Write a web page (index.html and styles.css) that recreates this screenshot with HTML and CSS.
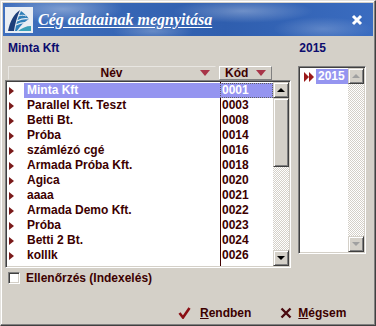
FILE: index.html
```html
<!DOCTYPE html>
<html lang="hu">
<head>
    <meta charset="UTF-8">
    <title>Cég adatainak megnyitása</title>
    <link rel="stylesheet" href="styles.css">
</head>
<body>
    <div class="window">
        <div class="titlebar">
            <svg class="logo" width="28" height="26" viewBox="0 0 28 26">
                <rect x="0" y="0" width="28" height="26" fill="#e9eef4"/>
                <path d="M3 24 C5 14 9 7 15 3 C12 10 10 17 9 24 Z" fill="#1d3f7a"/>
                <path d="M10 24 C11 17 13 10 16 4 C19 6 22 9 24 12 C19 15 15 19 12 24 Z" fill="#2f7fb8"/>
                <path d="M12 14 C16 12 20 11 24 12" stroke="#e9eef4" stroke-width="1.2" fill="none"/>
                <path d="M11 18 C15 16 19 15 24 16" stroke="#e9eef4" stroke-width="1.2" fill="none"/>
                <path d="M13 9 C16 8 19 8 21 9" stroke="#e9eef4" stroke-width="1" fill="none"/>
                <path d="M13 24 C17 21 21 19 26 19 L26 24 Z" fill="#3aa0b8"/>
            </svg>
            <span class="title">Cég adatainak megnyitása</span>
            <svg class="close" width="12" height="12" viewBox="0 0 12 12">
                <path d="M2 2 L10 10 M10 2 L2 10" stroke="#fff" stroke-width="3"/>
            </svg>
        </div>

        <div class="content">
            <div class="labels">
                <span class="company">Minta Kft</span>
                <span class="year-label">2015</span>
            </div>

            <div class="lists">
                <div class="grid-wrap">
                    <div class="grid-head">
                        <div class="head-name"><span class="head-text">Név</span><i class="sort"></i></div>
                        <div class="head-code"><span>Kód</span><i class="sort"></i></div>
                    </div>
                    <div class="grid sunken">
                        <div class="rows">
                            <div class="row selected"><span class="mark"></span><span class="name">Minta Kft</span><span class="code">0001</span></div>
                            <div class="row"><span class="mark"></span><span class="name">Parallel Kft. Teszt</span><span class="code">0003</span></div>
                            <div class="row"><span class="mark"></span><span class="name">Betti Bt.</span><span class="code">0008</span></div>
                            <div class="row"><span class="mark"></span><span class="name">Próba</span><span class="code">0014</span></div>
                            <div class="row"><span class="mark"></span><span class="name">számlézó cgé</span><span class="code">0016</span></div>
                            <div class="row"><span class="mark"></span><span class="name">Armada Próba Kft.</span><span class="code">0018</span></div>
                            <div class="row"><span class="mark"></span><span class="name">Agica</span><span class="code">0020</span></div>
                            <div class="row"><span class="mark"></span><span class="name">aaaa</span><span class="code">0021</span></div>
                            <div class="row"><span class="mark"></span><span class="name">Armada Demo Kft.</span><span class="code">0022</span></div>
                            <div class="row"><span class="mark"></span><span class="name">Próba</span><span class="code">0023</span></div>
                            <div class="row"><span class="mark"></span><span class="name">Betti 2 Bt.</span><span class="code">0024</span></div>
                            <div class="row"><span class="mark"></span><span class="name">kolllk</span><span class="code">0026</span></div>
                        </div>
                        <div class="vscroll">
                            <div class="sbtn"><i class="arrow-up"></i></div>
                            <div class="thumb"></div>
                            <div class="track"></div>
                            <div class="sbtn"><i class="arrow-down"></i></div>
                        </div>
                    </div>
                </div>

                <div class="years sunken">
                    <div class="year-rows">
                        <div class="year-row"><span class="mark2"><i></i><i></i></span><span class="year selected-year">2015</span></div>
                    </div>
                    <div class="vscroll disabled">
                        <div class="sbtn"><i class="arrow-up"></i></div>
                        <div class="track"></div>
                        <div class="sbtn"><i class="arrow-down"></i></div>
                    </div>
                </div>
            </div>

            <label class="check">
                <span class="box"></span>
                <span>Ellenőrzés (Indexelés)</span>
            </label>

            <div class="buttons">
                <div class="btn ok">
                    <svg width="13" height="12" viewBox="0 0 13 12">
                        <path d="M1.5 6 L5 10.5 L11.5 1" stroke="#8b0f14" stroke-width="2.6" fill="none"/>
                    </svg>
                    <span><u>R</u>endben</span>
                </div>
                <div class="btn cancel">
                    <svg width="12" height="12" viewBox="0 0 12 12">
                        <path d="M1.5 1.5 L10.5 10.5 M10.5 1.5 L1.5 10.5" stroke="#4a0a10" stroke-width="2.4"/>
                    </svg>
                    <span><u>M</u>égsem</span>
                </div>
            </div>
        </div>
    </div>
</body>
</html>
```

FILE: styles.css
```css
body {
    margin: 0;
    font-family: "Liberation Sans", Arial, sans-serif;
    font-size: 12px;
    font-weight: bold;
}
.window {
    width: 376px;
    height: 326px;
    box-sizing: border-box;
    background-color: #d4d0c8;
    border: 1px solid;
    border-color: #e4e2de #404040 #404040 #e4e2de;
    box-shadow: inset -1px -1px #808080, inset 1px 1px #fff;
    padding: 2px;
}
.titlebar {
    height: 33px;
    display: flex;
    align-items: center;
    padding-left: 2px;
    background-color: #3463b3;
    background-image:
        radial-gradient(ellipse 60px 14px at 60px 6px, rgba(255,255,255,0.35), transparent),
        radial-gradient(ellipse 40px 10px at 150px 28px, rgba(255,255,255,0.25), transparent),
        radial-gradient(ellipse 70px 12px at 240px 8px, rgba(255,255,255,0.3), transparent),
        radial-gradient(ellipse 50px 12px at 320px 26px, rgba(255,255,255,0.2), transparent),
        linear-gradient(to right, #3f6fbd, #2f5eae 60%, #3a6cc0);
}
.logo {
    display: block;
}
.title {
    margin-left: 5px;
    font-family: "Liberation Serif", "Times New Roman", serif;
    font-style: italic;
    font-size: 16px;
    color: #fff;
    text-decoration: underline;
    text-underline-offset: 2px;
}
.close {
    margin-left: auto;
    margin-right: 10px;
}
.content {
    padding: 0 2px;
}
.labels {
    display: flex;
    height: 14px;
    line-height: 14px;
    margin-top: 5px;
    color: #0c0c6e;
}
.company {
    margin-left: 3px;
}
.year-label {
    margin-left: auto;
    margin-right: 45px;
}
.lists {
    display: flex;
    gap: 7px;
    margin-top: 11px;
}
.grid-wrap {
    width: 286px;
}
.grid-head {
    display: flex;
    height: 14px;
    color: #400000;
}
.head-name,
.head-code {
    display: flex;
    align-items: center;
    box-sizing: border-box;
    border: 1px solid;
    border-color: #fff #808080 #808080 #fff;
}
.head-name {
    width: 208px;
    margin-left: 3px;
    border-color: #e8e6e2 #d4d0c8 #d4d0c8 #e8e6e2;
}
.head-text {
    flex: 1;
    text-align: center;
    padding-left: 14px;
}
.head-code {
    width: 53px;
    margin-left: 3px;
    padding-left: 5px;
}
.head-code span {
    flex: 1;
}
.sort {
    width: 0;
    height: 0;
    border-left: 5px solid transparent;
    border-right: 5px solid transparent;
    border-top: 6px solid #a83448;
    margin-right: 5px;
}
.sunken {
    box-sizing: border-box;
    border: 1px solid;
    border-color: #808080 #fff #fff #808080;
    box-shadow: inset 1px 1px #404040, inset -1px -1px #d4d0c8;
    background-color: #fff;
    padding: 1px;
}
.grid {
    display: flex;
    height: 188px;
}
.rows {
    flex: 1;
    padding-top: 1px;
    background-image: linear-gradient(#400000, #400000);
    background-repeat: no-repeat;
    background-position: 213px 0;
    background-size: 1px 100%;
    color: #3c0000;
}
.row {
    display: flex;
    height: 15px;
    line-height: 15px;
}
.mark {
    width: 17px;
    display: flex;
    align-items: center;
}
.mark::before {
    content: "";
    margin-left: 2px;
    width: 0;
    height: 0;
    border-top: 4px solid transparent;
    border-bottom: 4px solid transparent;
    border-left: 5px solid #7a1a1a;
}
.name {
    width: 193px;
    padding-left: 3px;
}
.code {
    flex: 1;
    padding-left: 2px;
}
.row.selected .name,
.row.selected .code {
    background-color: #9595f0;
    color: #fff;
}
.row.selected .code {
    outline: 1px dotted #606060;
    outline-offset: -1px;
}
.vscroll {
    width: 16px;
    display: flex;
    flex-direction: column;
    background-color: #ecebe8;
    background-image: repeating-conic-gradient(#fff 0 25%, #d4d0c8 0 50%);
    background-size: 2px 2px;
}
.sbtn,
.thumb {
    box-sizing: border-box;
    background-color: #d4d0c8;
    border: 1px solid;
    border-color: #d4d0c8 #404040 #404040 #d4d0c8;
    box-shadow: inset 1px 1px #fff, inset -1px -1px #808080;
}
.sbtn {
    height: 16px;
    display: flex;
    align-items: center;
    justify-content: center;
}
.thumb {
    height: 69px;
}
.track {
    flex: 1;
}
.arrow-up,
.arrow-down {
    width: 0;
    height: 0;
    border-left: 4px solid transparent;
    border-right: 4px solid transparent;
}
.arrow-up {
    border-bottom: 4px solid #000;
}
.arrow-down {
    border-top: 4px solid #000;
}
.disabled .arrow-up {
    border-bottom-color: #a0a0a0;
}
.disabled .arrow-down {
    border-top-color: #a0a0a0;
}
.years {
    width: 68px;
    height: 188px;
    display: flex;
}
.year-rows {
    flex: 1;
    padding-top: 1px;
}
.year-row {
    display: flex;
    height: 15px;
    line-height: 15px;
}
.mark2 {
    width: 16px;
    display: flex;
    align-items: center;
    padding-left: 4px;
    box-sizing: border-box;
}
.mark2 i {
    width: 0;
    height: 0;
    border-top: 5px solid transparent;
    border-bottom: 5px solid transparent;
    border-left: 5px solid #9b1a1a;
}
.selected-year {
    background-color: #9595f0;
    color: #fff;
    padding: 0 3px 0 2px;
}
.check {
    display: flex;
    align-items: center;
    height: 14px;
    margin-top: 3px;
    color: #3c0000;
}
.box {
    width: 12px;
    height: 12px;
    box-sizing: border-box;
    margin-left: 3px;
    margin-right: 6px;
    background-color: #fff;
    border: 1px solid;
    border-color: #808080 #fff #fff #808080;
    box-shadow: inset 1px 1px #404040, inset -1px -1px #d4d0c8;
}
.buttons {
    display: flex;
    gap: 29px;
    margin-top: 20px;
    padding-left: 173px;
    height: 16px;
    align-items: center;
    color: #3c0000;
}
.btn {
    display: flex;
    align-items: center;
}
.ok svg {
    margin-right: 9px;
}
.cancel svg {
    margin-right: 6px;
}
```
